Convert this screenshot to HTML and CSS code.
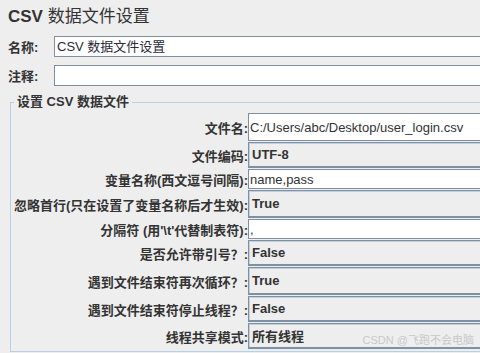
FILE: index.html
```html
<!DOCTYPE html>
<html lang="zh-CN">
<head>
    <meta charset="UTF-8">
    <title>CSV 数据文件设置</title>
    <link rel="stylesheet" href="styles.css">
</head>
<body>
    <div class="page">
        <h1 class="title"><b>CSV</b> 数据文件设置</h1>

        <div class="line">
            <label class="line-label">名称:</label>
            <div class="box">CSV 数据文件设置</div>
        </div>
        <div class="line">
            <label class="line-label">注释:</label>
            <div class="box"></div>
        </div>

        <!-- CSV settings group -->
        <fieldset class="group">
            <legend>设置 CSV 数据文件</legend>
            <div class="grid">
                <span class="key tall">文件名:</span>
                <div class="field tall">C:/Users/abc/Desktop/user_login.csv</div>

                <span class="key mid">文件编码:</span>
                <div class="combo mid">UTF-8</div>

                <span class="key short">变量名称(西文逗号间隔):</span>
                <div class="field short">name,pass</div>

                <span class="key tall">忽略首行(只在设置了变量名称后才生效):</span>
                <div class="combo tall">True</div>

                <span class="key short">分隔符 (用'\t'代替制表符):</span>
                <div class="field short">,</div>

                <span class="key mid">是否允许带引号？:</span>
                <div class="combo mid">False</div>

                <span class="key tall">遇到文件结束符再次循环？:</span>
                <div class="combo tall">True</div>

                <span class="key mid">遇到文件结束符停止线程？:</span>
                <div class="combo mid">False</div>

                <span class="key mid">线程共享模式:</span>
                <div class="combo mid">所有线程</div>
            </div>
        </fieldset>
    </div>
    <div class="watermark">CSDN @飞跑不会电脑</div>
</body>
</html>
```

FILE: styles.css
```css
html, body {
    margin: 0;
    padding: 0;
    height: 100%;
    overflow: hidden;
}

body {
    background-color: #eeeeee;
    color: #333333;
    font-family: "Liberation Sans", "Noto Sans CJK SC", sans-serif;
    font-size: 13px;
}

.title {
    margin: 0;
    padding: 6px 8px 0;
    height: 30px;
    font-size: 17px;
    font-weight: normal;
    line-height: 22px;
    color: #333;
}

.title b {
    font-weight: bold;
}

.line {
    display: flex;
    align-items: center;
    padding-left: 8px;
    margin-bottom: 8px;
}

.line-label {
    width: 46px;
    font-weight: bold;
}

.box {
    flex: 1;
    height: 19px;
    line-height: 19px;
    padding-left: 2px;
    background-color: #fff;
    border: 1px solid #7f8fa0;
    border-right: none;
    color: #2a2a3a;
}

.group {
    margin: 0 0 0 10px;
    padding: 3px 0 2px 0;
    border: 1px solid #b8cfe8;
    border-right: none;
    min-width: 0;
}

.group legend {
    margin-left: 3px;
    padding: 0 3px;
    font-weight: bold;
    line-height: 16px;
}

.grid {
    display: grid;
    grid-template-columns: 237px 1fr;
    row-gap: 1px;
}

.key {
    display: flex;
    align-items: center;
    justify-content: flex-end;
    font-weight: bold;
    white-space: nowrap;
}

.tall { height: 28px; }
.mid { height: 26px; }
.short { height: 20px; }

.field,
.combo {
    box-sizing: border-box;
    display: flex;
    align-items: center;
    white-space: nowrap;
}

.field {
    background-color: #fff;
    border: 1px solid #7f8fa0;
    border-right: none;
    padding-left: 1px;
}

.combo {
    background-color: #eeeeee;
    border: 1px solid #7d90a4;
    border-bottom-width: 2px;
    border-right: none;
    box-shadow: inset 1px 1px 0 #c4ced9;
    padding-left: 3px;
    font-weight: bold;
}

.watermark {
    position: absolute;
    right: 6px;
    bottom: 6px;
    font-size: 11px;
    color: #c9c9c9;
}
```
